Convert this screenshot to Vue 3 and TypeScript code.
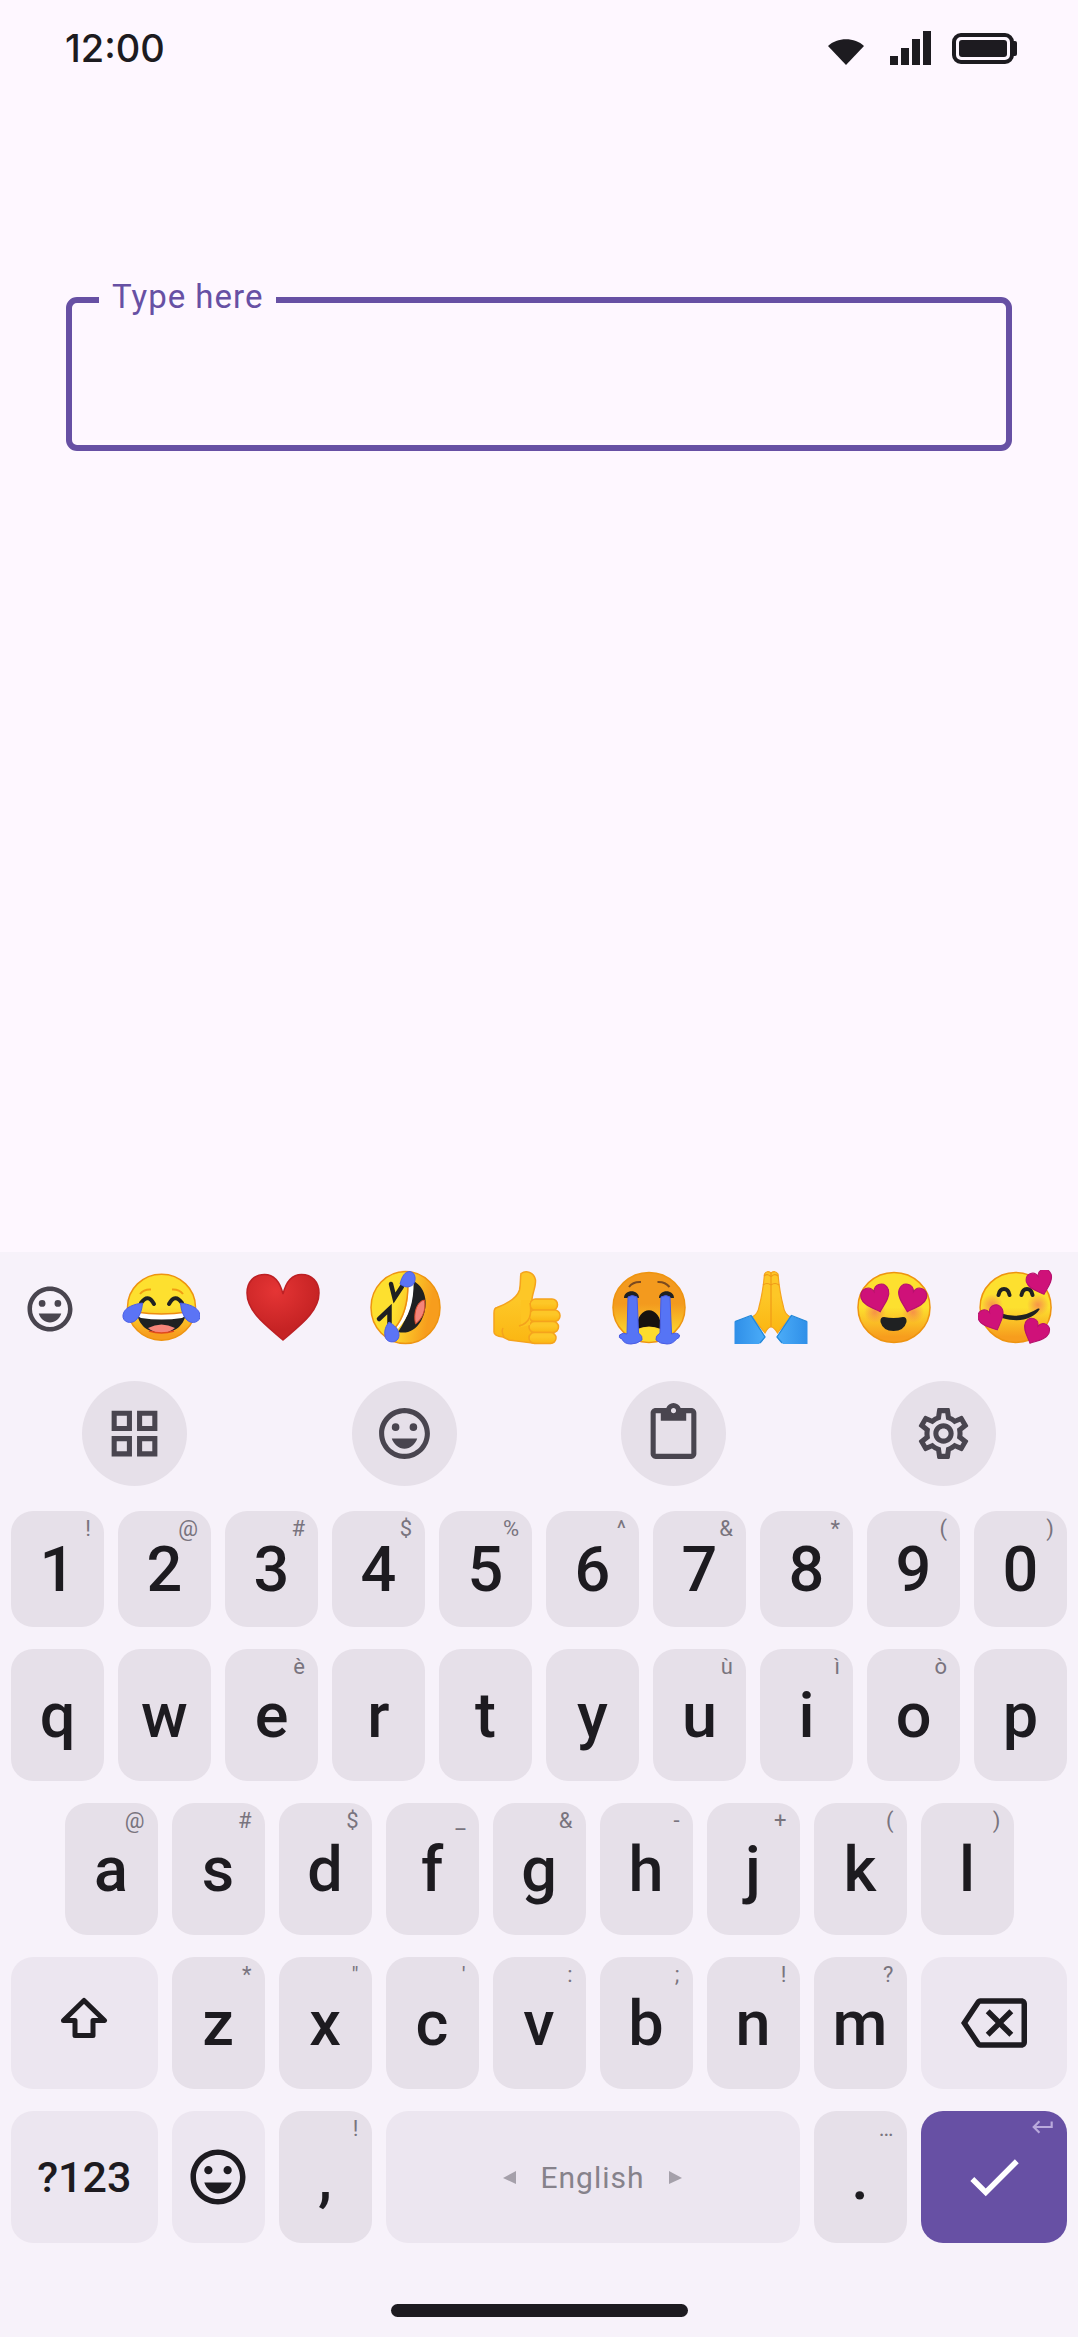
<script setup lang="ts">
import { ref } from 'vue'

interface Key {
  label?: string
  hint?: string
  icon?: string
  name?: string
  span?: number
  kind?: string
}

const text = ref('')

/** Recently used emoji, drawn on a 78 × 78 canvas; gradients are defined in the template. */
const emojis: { name: string; char: string; art: string }[] = [
  {
    name: 'Face with tears of joy',
    char: '😂',
    art: `<ellipse cx="39.5" cy="37.2" rx="34" ry="33" fill="url(#face)" stroke="#ee9410" stroke-width="1.500"/>
      <path d="M18 24Q22 19 29 19.500M61 24Q57 19 50 19.500" fill="none" stroke="#f19c12" stroke-width="2"/>
      <path d="M15 42Q39.500 46 64 42C63 55 53 63 39.500 63C26 63 16 55 15 42Z" fill="#1f2122"/>
      <path d="M15 42Q39.500 46 64 42Q63 47 60 48Q39.500 51 19 48Q16 47 15 42Z" fill="#fff"/>
      <path d="M14 42Q39.500 46 65 42" fill="none" stroke="#ee8c10" stroke-width="1.500"/>
      <path d="M26 58Q39.500 51 53 58Q47 63 39.500 63Q32 63 26 58Z" fill="#f5857a"/>
      <path d="M27 61Q39.500 65 52 61" fill="none" stroke="#e2491c" stroke-width="1.500"/>
      <path d="M19 33Q26 23 32 34M47 34Q53 23 60 33" fill="none" stroke="#1f2122" stroke-width="4" stroke-linecap="round"/>
      <path d="M20.500 33C13 34 2 37 1 45C0 52 9 55 14 50C18 46 20 40 20.500 33ZM58.500 33C66 34 77 37 78 45C79 52 70 55 65 50C61 46 59 40 58.500 33Z" fill="#5b74f5" stroke="#4a5fe6" stroke-width="1"/>`,
  },
  {
    name: 'Red heart',
    char: '❤️',
    art: `<path d="M39 24C36 12 30 4.500 20.500 4.500C10 4.500 3 12 3 23C3 42 23 56 39 70C55 56 75 42 75 23C75 12 68 4.500 57.500 4.500C48 4.500 42 12 39 24Z" fill="url(#heart)" stroke="#bd2024" stroke-width="1.500"/>`,
  },
  {
    name: 'Rolling on the floor laughing',
    char: '🤣',
    art: `<ellipse cx="38.500" cy="37.500" rx="34.500" ry="36" fill="url(#side)" stroke="#ee9410" stroke-width="1.500"/>
      <path d="M46.500 11C60 18 62 37 54 51C48 61 40 64 31 62C42 46 46 30 46.500 11Z" fill="#1f2122"/>
      <path d="M41 14L46.500 12C47 32 42 47 31 59Q29 58 30 56C39 44 42 30 41 14Z" fill="#fff"/>
      <path d="M41 14C41 32 38 46 28 58" fill="none" stroke="#ee8c10" stroke-width="1.500"/>
      <path d="M57.500 30C50 31 46 43 48.500 54C56 48 59 40 57.500 30Z" fill="#f5857a" stroke="#d64a2a" stroke-width="1"/>
      <path d="M24 14L27.500 28L35 16.500M12 49L22.500 39V54" fill="none" stroke="#1f2122" stroke-width="4.500" stroke-linecap="round"/>
      <path d="M33 14C35 6 38 1.500 43 1.500C50 3 49 13 45 15.500C41 18 37 17 33 14ZM22 52C27 55 32 59 32 65C32 74 19 74 18 66C17 60 19 56 22 52Z" fill="#5b74f5" stroke="#4a5fe6" stroke-width="1"/>`,
  },
  {
    name: 'Thumbs up',
    char: '👍',
    art: `<g fill="url(#skin)" stroke="#f5a31c" stroke-width="1.500">
      <path d="M8 37.500C20 33 28 28 30.500 20C32 13 31 8 32 3.500C37 0 45 2 46.500 10C47 17 43 24 43 30V73L20 70L14 67Q5 66 5 62V43Q5 38 8 37.500Z"/>
      <rect x="41" y="29" width="27.500" height="11.500" rx="5.500"/><rect x="40" y="40" width="31" height="11.500" rx="5.500"/>
      <rect x="40" y="51.500" width="29.500" height="11" rx="5.500"/><rect x="40" y="62.500" width="27" height="11" rx="5.500"/></g>
      <path d="M41 32V55Q38 56 32 57V30H41Z" fill="#fdc421"/><path d="M41 33C43 45 41 53 30 56M14 58Q12 62 15 67" fill="none" stroke="#f5a31c" stroke-width="1.500"/>`,
  },
  {
    name: 'Loudly crying face',
    char: '😭',
    art: `<ellipse cx="38" cy="37.400" rx="36" ry="35" fill="url(#cry)" stroke="#ee9410" stroke-width="1.500"/>
      <path d="M18 17Q22 11.500 30 12M46.500 12Q54 11.500 58.500 17" fill="none" stroke="#7b4a1f" stroke-width="2"/>
      <path d="M13 28C13 19 28 19 28 28ZM48 28C48 19 63 19 63 28Z" fill="#1f2122"/>
      <path d="M26 59C25 34 51 34 50 59Q38 54 26 59Z" fill="#16120f"/><path d="M26 60Q38 54 50 60V69Q38 74 26 69Z" fill="#fcdc2c"/>
      <path d="M17 27Q21 24 26 27Q27 45 27.500 63Q32 66 31 70Q26 74 20 74Q13 74 11 69Q7 68 8.500 65Q12 62 16 64ZM50 27Q55 24 59 27L60.500 64Q66 62 68.500 65Q69 68 65.500 69Q62 74 56 74Q49 74 45 70Q44 66 49 63Z" fill="#5674f5" stroke="#475be3" stroke-width="1"/>`,
  },
  {
    name: 'Folded hands',
    char: '🙏',
    art: `<path d="M38 57Q35 57 32 63L19 47Q25 44 26 37Q30 22 31.500 4Q34 0 38 3Q42 0 45 4Q46.500 22 50.500 37Q51.500 44 57.500 47L44.500 63Q41 57 38 57Z" fill="url(#skin)" stroke="#f5a31c" stroke-width="1.200"/>
      <path d="M38 3V57M31 6Q35 3 38 7Q41 3 45 6M30 15Q34 12 38 15Q42 12 46 15" fill="none" stroke="#f09a18" stroke-width="1.200"/>
      <path d="M1.500 51.500L19 45.500L32.500 67Q30 71 26 74H1.500ZM74.500 51.500L57.500 45.500L43.500 67Q46 71 50 74H74.500Z" fill="url(#sleeve)"/>
      <path d="M2 51.500L18 45.500L32 67L27 73M74 51.500L58.500 45.500L44 67L49 73" fill="none" stroke="#2488d8" stroke-width="1.200"/>`,
  },
  {
    name: 'Smiling face with heart-eyes',
    char: '😍',
    art: `<ellipse cx="38" cy="37.400" rx="36" ry="35" fill="url(#face)" stroke="#ee9410" stroke-width="1.500"/>
      <circle cx="19" cy="42" r="11" fill="url(#blush)"/><circle cx="57" cy="42" r="11" fill="url(#blush)"/>
      <g fill="#cf1179" stroke="#b5106c"><path transform="translate(20 28) rotate(-17) scale(1.100)" d="M0-6C-2-13-12-13-13-4C-13 3-5 8 0 13C5 8 13 3 13-4C12-13 2-13 0-6Z"/>
      <path transform="translate(55.500 28) rotate(17) scale(1.100)" d="M0-6C-2-13-12-13-13-4C-13 3-5 8 0 13C5 8 13 3 13-4C12-13 2-13 0-6Z"/></g>
      <path d="M28 47Q37.500 49 47 47Q51 47 50.500 52Q48 61 37.500 61Q27 61 24.500 52Q24 47 28 47Z" fill="#1f2122"/>`,
  },
  {
    name: 'Smiling face with hearts',
    char: '🥰',
    art: `<ellipse cx="37.600" cy="37.400" rx="35.500" ry="35" fill="url(#face)" stroke="#ee9410" stroke-width="1.500"/>
      <circle cx="14" cy="35" r="11" fill="url(#blush)"/><circle cx="60" cy="35" r="11" fill="url(#blush)"/>
      <path d="M20.500 25C22 17 30 17 31.500 25M43.500 25C45 17 53 17 54.500 25" fill="none" stroke="#1f2122" stroke-width="4" stroke-linecap="round"/>
      <path d="M22 43Q42 50 60 38.500Q62 38 61.500 39.500C55 49 42 53 24 48Z" fill="#1f2122"/>
      <g fill="#cf1179" stroke="#b5106c"><path transform="translate(62 12) rotate(-18)" d="M0-6C-2-13-12-13-13-4C-13 3-5 8 0 13C5 8 13 3 13-4C12-13 2-13 0-6Z"/>
      <path transform="translate(14 48) rotate(-24)" d="M0-6C-2-13-12-13-13-4C-13 3-5 8 0 13C5 8 13 3 13-4C12-13 2-13 0-6Z"/>
      <path transform="translate(57.500 61.500) rotate(25)" d="M0-6C-2-13-12-13-13-4C-13 3-5 8 0 13C5 8 13 3 13-4C12-13 2-13 0-6Z"/></g>`,
  },
]

const icons: Record<string, string> = {
  smile:
    'M12 2C6.47 2 2 6.47 2 12s4.47 10 10 10 10-4.48 10-10S17.52 2 12 2zm0 18c-4.42 0-8-3.58-8-8s3.58-8 8-8 8 3.58 8 8-3.58 8-8 8zM8.5 8a1.5 1.5 0 1 0 0 3 1.5 1.5 0 0 0 0-3zm7 0a1.5 1.5 0 1 0 0 3 1.5 1.5 0 0 0 0-3zM12 18c2.28 0 4.22-1.66 5-4H7c.78 2.34 2.72 4 5 4z',
  grid: 'M3 3v8h8V3H3zm6 6H5V5h4v4zm-6 4v8h8v-8H3zm6 6H5v-4h4v4zm4-16v8h8V3h-8zm6 6h-4V5h4v4zm-6 4v8h8v-8h-8zm6 6h-4v-4h4v4z',
  clipboard:
    'M19 2h-4.18C14.4.84 13.3 0 12 0c-1.3 0-2.4.84-2.82 2H5c-1.1 0-2 .9-2 2v16c0 1.1.9 2 2 2h14c1.1 0 2-.9 2-2V4c0-1.1-.9-2-2-2zm-7 0c.55 0 1 .45 1 1s-.45 1-1 1-1-.45-1-1 .45-1 1-1zm7 18H5V4h2v3h10V4h2v16z',
  settings:
    'M19.43 12.98c.04-.32.07-.64.07-.98s-.03-.66-.07-.98l2.11-1.65c.19-.15.24-.42.12-.64l-2-3.46c-.09-.16-.26-.25-.44-.25-.06 0-.12.01-.17.03l-2.49 1c-.52-.4-1.08-.73-1.69-.98l-.38-2.65C14.46 2.18 14.25 2 14 2h-4c-.25 0-.46.18-.49.42l-.38 2.65c-.61.25-1.17.59-1.69.98l-2.49-1c-.06-.02-.12-.03-.18-.03-.17 0-.34.09-.43.25l-2 3.46c-.13.22-.07.49.12.64l2.11 1.65c-.04.32-.07.65-.07.98s.03.66.07.98l-2.11 1.65c-.19.15-.24.42-.12.64l2 3.46c.09.16.26.25.44.25.06 0 .12-.01.17-.03l2.49-1c.52.4 1.08.73 1.69.98l.38 2.65c.03.24.24.42.49.42h4c.25 0 .46-.18.49-.42l.38-2.65c.61-.25 1.17-.59 1.69-.98l2.49 1c.06.02.12.03.18.03.17 0 .34-.09.43-.25l2-3.46c.12-.22.07-.49-.12-.64l-2.11-1.65zm-1.98-1.71c.04.31.05.52.05.73 0 .21-.02.43-.05.73l-.14 1.13.89.7 1.08.84-.7 1.21-1.27-.51-1.04-.42-.9.68c-.43.32-.84.56-1.25.73l-1.06.43-.16 1.13-.2 1.35h-1.4l-.19-1.35-.16-1.13-1.06-.43c-.43-.18-.83-.41-1.23-.71l-.91-.7-1.06.43-1.27.51-.7-1.21 1.08-.84.89-.7-.14-1.13c-.03-.31-.05-.54-.05-.74s.02-.43.05-.73l.14-1.13-.89-.7-1.08-.84.7-1.21 1.27.51 1.04.42.9-.68c.43-.32.84-.56 1.25-.73l1.06-.43.16-1.13.2-1.35h1.39l.19 1.35.16 1.13 1.06.43c.43.18.83.41 1.23.71l.91.7 1.06-.43 1.27-.51.7 1.21-1.07.85-.89.7.14 1.13zM12 8c-2.21 0-4 1.79-4 4s1.79 4 4 4 4-1.79 4-4-1.79-4-4-4zm0 6c-1.1 0-2-.9-2-2s.9-2 2-2 2 .9 2 2-.9 2-2 2z',
  backspace:
    'M22 3H7c-.69 0-1.23.35-1.59.88L0 12l5.41 8.11c.36.53.9.89 1.59.89h15c1.1 0 2-.9 2-2V5c0-1.1-.9-2-2-2zm0 16H7.07L2.4 12l4.66-7H22v14zm-11.59-2L14 13.41 17.59 17 19 15.59 15.41 12 19 8.41 17.59 7 14 10.59 10.41 7 9 8.41 12.59 12 9 15.59z',
  check: 'M9 16.17L4.83 12l-1.42 1.41L9 19 21 7l-1.41-1.41z',
}

const tools: { icon: string; name: string }[] = [
  { icon: 'grid', name: 'Features' },
  { icon: 'smile', name: 'Emoji' },
  { icon: 'clipboard', name: 'Clipboard' },
  { icon: 'settings', name: 'Settings' },
]

/** Pairs each character with the hint at the same place; a blank means no hint. */
function keys(labels: string, hints: string): Key[] {
  return [...labels].map((label, i) => ({ label, hint: hints[i].trim() }))
}

const rows: { name: string; keys: Key[] }[] = [
  { name: 'digits', keys: keys('1234567890', '!@#$%^&*()') },
  { name: 'top', keys: keys('qwertyuiop', '  è   ùìò ') },
  { name: 'home', keys: keys('asdfghjkl', '@#$_&-+()') },
  {
    name: 'bottom',
    keys: [
      { icon: 'shift', name: 'Shift', span: 3, kind: 'soft' },
      ...keys('zxcvbnm', '*"\':;!?'),
      { icon: 'backspace', name: 'Delete', span: 3, kind: 'soft' },
    ],
  },
  {
    name: 'action',
    keys: [
      { label: '?123', span: 3, kind: 'soft symbols' },
      { icon: 'smile', name: 'Emoji', kind: 'soft' },
      { label: ',', hint: '!' },
      { label: 'English', span: 8, kind: 'soft space' },
      { label: '.', hint: '…' },
      { icon: 'check', name: 'Done', span: 3, kind: 'enter' },
    ],
  },
]

function press(key: Key): void {
  if (key.label && key.label.length === 1) text.value += key.label
  else if (key.icon === 'backspace') text.value = [...text.value].slice(0, -1).join('')
  else if (key.label === 'English') text.value += ' '
}
</script>

<template>
  <div class="screen">
    <svg class="defs" aria-hidden="true">
      <defs>
        <linearGradient id="face" x1="0" y1="0" x2="0" y2="1">
          <stop offset="0.500" stop-color="#fde02f" />
          <stop offset="0.920" stop-color="#f79d1d" />
        </linearGradient>
        <linearGradient id="side" x1="0" y1="0.400" x2="1" y2="0.600">
          <stop offset="0.350" stop-color="#fde02f" />
          <stop offset="0.850" stop-color="#f79d1d" />
        </linearGradient>
        <linearGradient id="cry" x1="0" y1="0" x2="0" y2="1">
          <stop offset="0.450" stop-color="#f39a1e" />
          <stop offset="0.850" stop-color="#fcd32c" />
        </linearGradient>
        <linearGradient id="skin" x1="0" y1="0" x2="0" y2="1">
          <stop offset="0.400" stop-color="#fdc727" />
          <stop offset="1" stop-color="#fbb612" />
        </linearGradient>
        <linearGradient id="sleeve" x1="0" y1="0" x2="1" y2="0">
          <stop offset="0" stop-color="#2f8fe8" />
          <stop offset="0.400" stop-color="#4aabf7" />
          <stop offset="0.600" stop-color="#4aabf7" />
          <stop offset="1" stop-color="#2f8fe8" />
        </linearGradient>
        <radialGradient id="heart" cx="0.400" cy="0.250" r="0.600">
          <stop offset="0" stop-color="#e53535" />
          <stop offset="1" stop-color="#c62324" />
        </radialGradient>
        <radialGradient id="blush">
          <stop offset="0" stop-color="#f5804e" stop-opacity="0.800" />
          <stop offset="1" stop-color="#f5804e" stop-opacity="0" />
        </radialGradient>
      </defs>
    </svg>

    <header class="status">
      <time class="clock">12:00</time>
      <div class="indicators">
        <svg width="40" height="34" viewBox="0 0 40 34" aria-hidden="true">
          <path d="M0 15C9 6 27 6 36 15L18 34Z" fill="currentColor" />
        </svg>
        <svg width="42" height="34" viewBox="0 0 42 34" aria-hidden="true">
          <path d="M1 25h8v9H1zM12 17h8v17h-8zM23 8h8v26h-8zM34 0h8v34h-8z" fill="currentColor" />
        </svg>
        <svg width="66" height="34" viewBox="0 0 66 34" aria-hidden="true">
          <rect x="2" y="4" width="58" height="27" rx="7" fill="none" stroke="currentColor" stroke-width="4" />
          <rect x="7" y="9" width="48" height="17" rx="3" fill="currentColor" />
          <path d="M61 10h2q2 0 2 2v11q0 2-2 2h-2z" fill="currentColor" />
        </svg>
      </div>
    </header>

    <main class="form">
      <div class="field">
        <label for="entry">Type here</label>
        <input id="entry" v-model="text" type="text" autocomplete="off" />
      </div>
    </main>

    <section class="keyboard" aria-label="Keyboard">
      <div class="suggestions">
        <button class="picker" type="button" aria-label="All emoji">
          <svg class="icon" viewBox="0 0 24 24"><path :d="icons.smile" /></svg>
        </button>
        <button
          v-for="emoji in emojis"
          :key="emoji.name"
          class="emoji"
          type="button"
          :aria-label="emoji.name"
          @click="text += emoji.char"
        >
          <svg width="78" height="78" viewBox="0 0 78 78" v-html="emoji.art"></svg>
        </button>
      </div>

      <div class="tools">
        <button v-for="tool in tools" :key="tool.name" class="tool" type="button" :aria-label="tool.name">
          <svg class="icon" viewBox="0 0 24 24"><path :d="icons[tool.icon]" /></svg>
        </button>
      </div>

      <div class="rows">
        <div v-for="row in rows" :key="row.name" class="row" :class="row.name">
          <button
            v-for="(key, i) in row.keys"
            :key="i"
            type="button"
            class="key"
            :class="[key.kind, 'span-' + (key.span ?? 2)]"
            :aria-label="key.name"
            @click="press(key)"
          >
            <template v-if="key.label === 'English'">
              <svg class="arrow" viewBox="0 0 13 13" aria-hidden="true"><path d="M13 0v13L0 7z" /></svg>
              <span>English</span>
              <svg class="arrow" viewBox="0 0 13 13" aria-hidden="true"><path d="M0 0v13l13-6z" /></svg>
            </template>
            <template v-else-if="key.label">{{ key.label }}</template>
            <svg v-else-if="key.icon === 'shift'" class="icon outline" viewBox="0 0 66 66">
              <path d="M33 10.500L53.500 30.500H42V45.500H24V30.500H12.500Z" />
            </svg>
            <svg v-else class="icon" viewBox="0 0 24 24"><path :d="icons[key.icon ?? '']" /></svg>
            <span v-if="key.hint" class="hint">{{ key.hint }}</span>
            <svg v-if="key.kind === 'enter'" class="return" viewBox="0 0 24 24" aria-hidden="true">
              <path d="M19 7v4H5.830l3.580-3.590L8 6l-6 6 6 6 1.410-1.410L5.830 13H21V7z" />
            </svg>
          </button>
        </div>
      </div>

      <div class="gesture"></div>
    </section>
  </div>
</template>

<style>
body {
  margin: 0;
  background: #fef7ff;
}
</style>

<style scoped>
.screen {
  display: flex;
  flex-direction: column;
  min-height: 100vh;
  background: #fef7ff;
  color: #1d1b20;
  font-family: Roboto, sans-serif;
}

.defs {
  position: absolute;
  width: 0;
  height: 0;
}

button {
  margin: 0;
  padding: 0;
  border: 0;
  background: none;
  color: inherit;
  font: inherit;
  cursor: pointer;
}

.icon {
  display: block;
  fill: currentColor;
}

.status {
  display: flex;
  align-items: center;
  justify-content: space-between;
  height: 96px;
  padding: 0 60px 0 65px;
}

.clock {
  font-family: Inter, sans-serif;
  font-size: 38px;
  font-weight: 500;
}

.indicators {
  display: flex;
  gap: 21px;
}

.form {
  padding: 201px 66px 40px;
}

.field {
  position: relative;
}

.field label {
  position: absolute;
  top: -20px;
  left: 33px;
  padding: 0 13px;
  background: #fef7ff;
  color: #6750a4;
  font-size: 33px;
  line-height: 40px;
  letter-spacing: 1px;
}

.field input {
  display: block;
  box-sizing: border-box;
  width: 100%;
  height: 154px;
  padding: 0 38px;
  border: 6px solid #6750a4;
  border-radius: 11px;
  outline: none;
  background: transparent;
  color: #1d1b20;
  font: 44px Roboto, sans-serif;
}

.keyboard {
  margin-top: auto;
  padding-bottom: 20px;
  background: #f7f2fa;
}

.suggestions {
  display: flex;
  align-items: center;
  height: 113px;
}

.picker {
  display: flex;
  flex: 0 0 100px;
  justify-content: center;
  color: #49454f;
}

.picker .icon {
  width: 54px;
  height: 54px;
}

.emoji {
  display: flex;
  flex: 1 1 0;
  justify-content: center;
}

.tools {
  display: flex;
  justify-content: space-around;
  padding: 16px 0 25px;
}

.tool {
  display: flex;
  align-items: center;
  justify-content: center;
  width: 105px;
  height: 105px;
  border-radius: 50%;
  background: #e6e0e9;
  color: #49454f;
}

.tool .icon {
  width: 61px;
  height: 61px;
}

.rows {
  display: flex;
  flex-direction: column;
  gap: 22px;
  padding: 0 4px;
}

.row {
  display: grid;
  grid-template-columns: repeat(20, 1fr);
  height: 132px;
}

.digits {
  height: 116px;
}

.home .key:first-child {
  grid-column: 2 / span 2;
}

.key {
  position: relative;
  display: flex;
  align-items: center;
  justify-content: center;
  min-width: 0;
  margin: 0 7px;
  border-radius: 22px;
  background: #e6e0e9;
  font-size: 63px;
  font-weight: 500;
}

.span-2 {
  grid-column: span 2;
}

.span-3 {
  grid-column: span 3;
}

.span-8 {
  grid-column: span 8;
}

.soft {
  background: #ece6f0;
}

.symbols {
  font-size: 43px;
}

.key .icon {
  width: 66px;
  height: 66px;
}

.key .outline {
  fill: none;
  stroke: currentColor;
  stroke-width: 5;
  stroke-linejoin: round;
}

.hint {
  position: absolute;
  top: 5px;
  right: 13px;
  color: #79747e;
  font-size: 22px;
  font-weight: 400;
  line-height: 26px;
}

.space {
  gap: 24px;
  color: #86828b;
  font-size: 30px;
  font-weight: 400;
  letter-spacing: 1px;
}

.arrow {
  width: 13px;
  height: 13px;
  fill: #a5a0aa;
}

.enter {
  background: #6750a4;
  color: #fff;
}

.return {
  position: absolute;
  top: 3px;
  right: 11px;
  width: 26px;
  height: 26px;
  fill: #b9a9dc;
}

.gesture {
  width: 297px;
  height: 13px;
  margin: 61px auto 0;
  border-radius: 7px;
  background: #1d1b20;
}
</style>
